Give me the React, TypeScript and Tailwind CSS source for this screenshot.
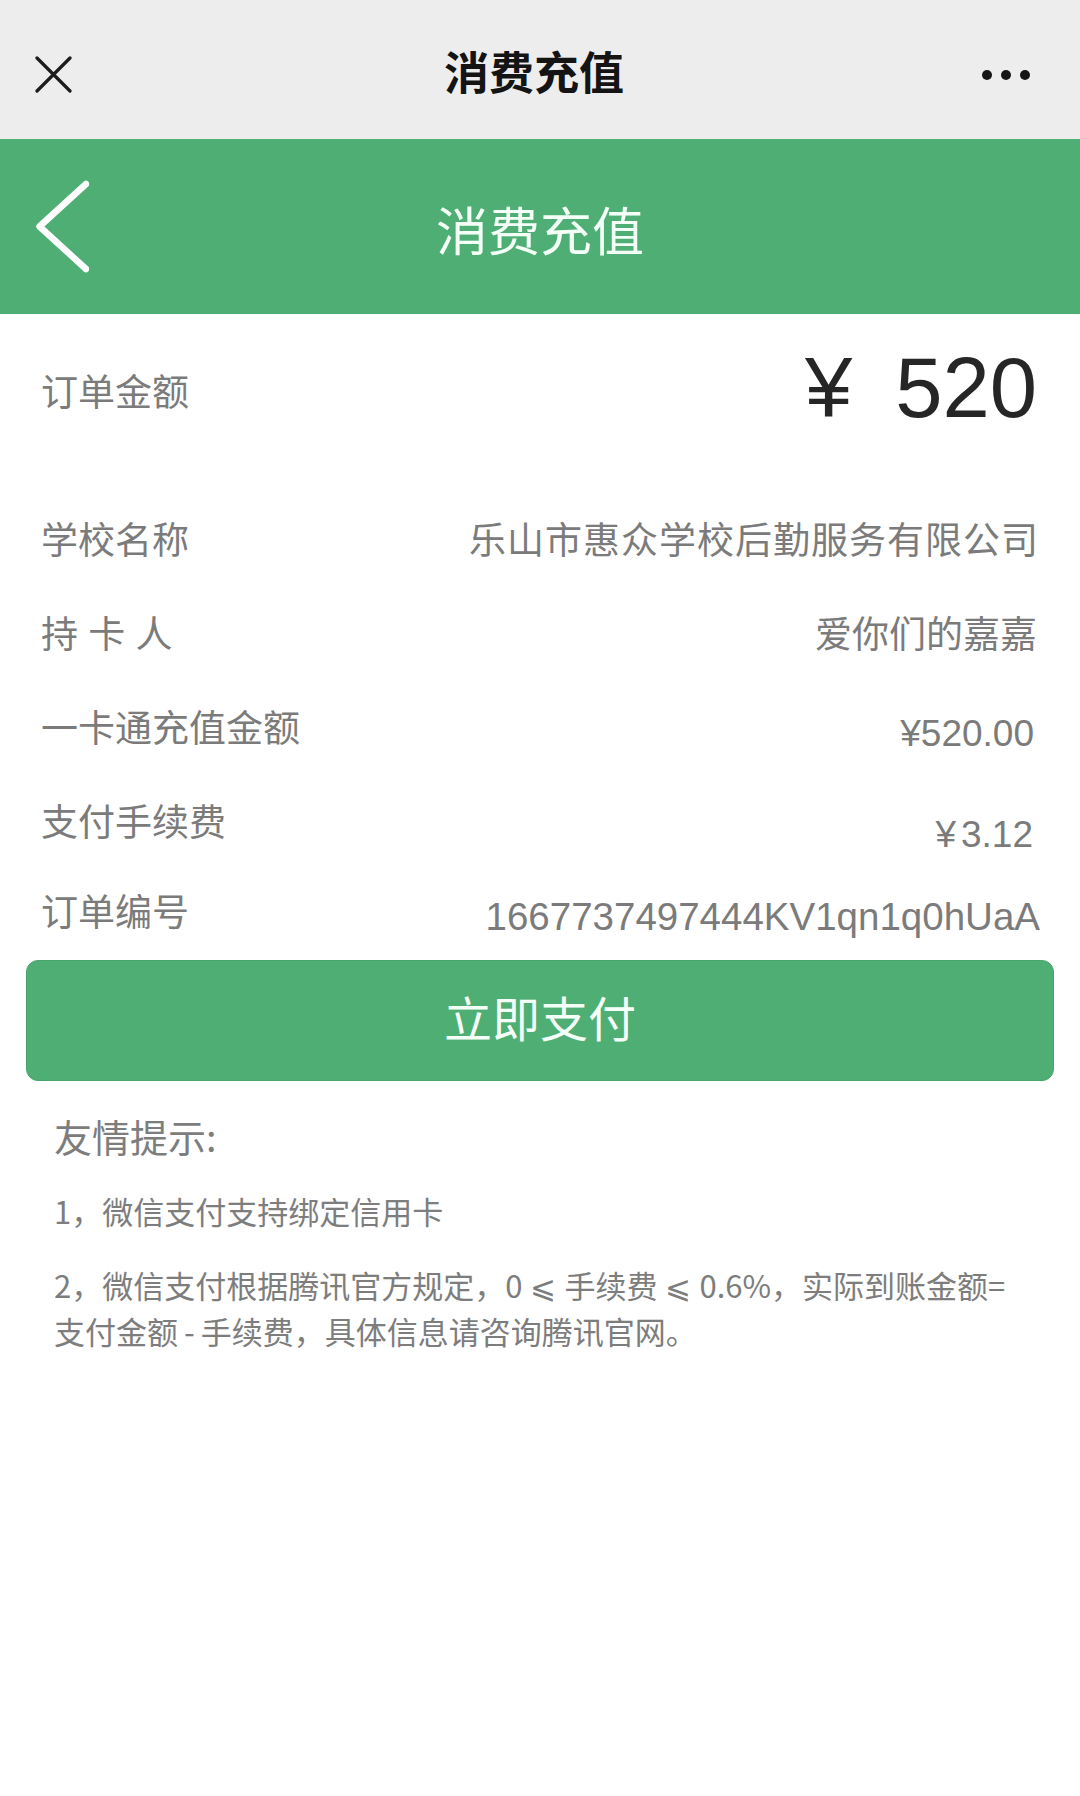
import React from "react";

const CJK = "font-['Liberation_Sans','Noto_Sans_CJK_SC',sans-serif]";

function Row({
  label,
  value,
  valueClass = "",
}: {
  label: string;
  value: React.ReactNode;
  valueClass?: string;
}) {
  return (
    <div className="flex h-[94px] items-center justify-between pl-[41px] pr-[41px]">
      <div className="shrink-0 whitespace-nowrap text-[37px] leading-[40px] text-[#7b7b7b]">{label}</div>
      <div className={`shrink-0 whitespace-nowrap text-[37px] leading-[40px] text-[#7b7b7b] ${valueClass}`}>{value}</div>
    </div>
  );
}

export default function App() {
  return (
    <div className={`w-[1080px] min-h-[1796px] bg-white ${CJK}`}>
      {/* WeChat top bar */}
      <div className="grid h-[139px] grid-cols-[1fr_auto_1fr] items-center bg-[#ededed] pt-[10px]">
        <div className="pl-[35px]">
          <svg width="37" height="37" viewBox="0 0 37 37" className="block">
            <path d="M2 2 L35 35 M35 2 L2 35" stroke="#1c1c1c" strokeWidth="3.2" strokeLinecap="round" />
          </svg>
        </div>
        <div className="pr-[12px] text-[45px] font-bold leading-[50px] text-[#141414]">消费充值</div>
        <div className="flex justify-end gap-[9px] pr-[50px]">
          <span className="block h-[10px] w-[10px] rounded-full bg-[#161616]" />
          <span className="block h-[10px] w-[10px] rounded-full bg-[#161616]" />
          <span className="block h-[10px] w-[10px] rounded-full bg-[#161616]" />
        </div>
      </div>

      {/* Green header */}
      <div className="grid h-[175px] grid-cols-[1fr_auto_1fr] items-center bg-[#4fae73]">
        <div className="pl-[36px]">
          <svg width="53" height="93" viewBox="0 0 53 93" className="block">
            <path d="M50 4 L3.5 46.5 L50 89" fill="none" stroke="#ffffff" strokeWidth="6.5" strokeLinecap="round" strokeLinejoin="round" />
          </svg>
        </div>
        <div className="pt-[13px] text-[52px] leading-[56px] text-[#f3fff7]">消费充值</div>
        <div />
      </div>

      {/* Amount */}
      <div className="flex h-[181px] items-start justify-between pl-[41px] pr-[43px]">
        <div className="pt-[61px] text-[37px] leading-[37px] text-[#7b7b7b]">订单金额</div>
        <div className="flex pt-[31px] text-[85px] leading-[85px] text-[#262626]">
          <span className="mr-[43px]">¥</span>
          <span>520</span>
        </div>
      </div>

      {/* Rows */}
      <Row
        label="学校名称"
        value={<span className="tracking-[1px]">乐山市惠众学校后勤服务有限公司</span>}
      />
      <Row label="持 卡 人" value="爱你们的嘉嘉" valueClass="mr-[2px]" />
      <Row label="一卡通充值金额" value="¥520.00" valueClass="mt-[8px] mr-[5px]" />
      <Row
        label="支付手续费"
        value={
          <span className="flex">
            <span>¥</span>
            <span className="ml-[5px]">3.12</span>
          </span>
        }
        valueClass="mt-[22px] mr-[6px]"
      />
      <div className="flex h-[86px] items-center justify-between pl-[41px] pr-[40px]">
        <div className="text-[37px] leading-[40px] text-[#7b7b7b]">订单编号</div>
        <div className="mt-[6px] text-[38.5px] leading-[40px] text-[#7b7b7b]">1667737497444KV1qn1q0hUaA</div>
      </div>

      {/* Pay button */}
      <div className="mt-[3px] px-[26px]">
        <div className="flex h-[121px] items-center justify-center rounded-[12px] border border-[#49a56b] bg-[#4fae73] text-[48px] leading-[52px] text-[#f4fff8]">
          立即支付
        </div>
      </div>

      {/* Tips */}
      <div className="px-[54px] pt-[36px] font-['Noto_Sans_CJK_SC',sans-serif] text-[#7d7d7d]">
        <div className="text-[38px] leading-[38px]">友情提示:</div>
        <div className="mt-[34px] text-[31px] leading-[44px]">1，微信支付支持绑定信用卡</div>
        <div className="mt-[29px] whitespace-nowrap text-[31px] leading-[46px]">
          2，微信支付根据腾讯官方规定，0<span className="mx-[8px]">⩽</span>手续费<span className="mx-[8px]">⩽</span>0.6%，实际到账金额=
          <br />
          支付金额<span className="mx-[6px]">-</span>手续费，具体信息请咨询腾讯官网。
        </div>
      </div>
    </div>
  );
}
